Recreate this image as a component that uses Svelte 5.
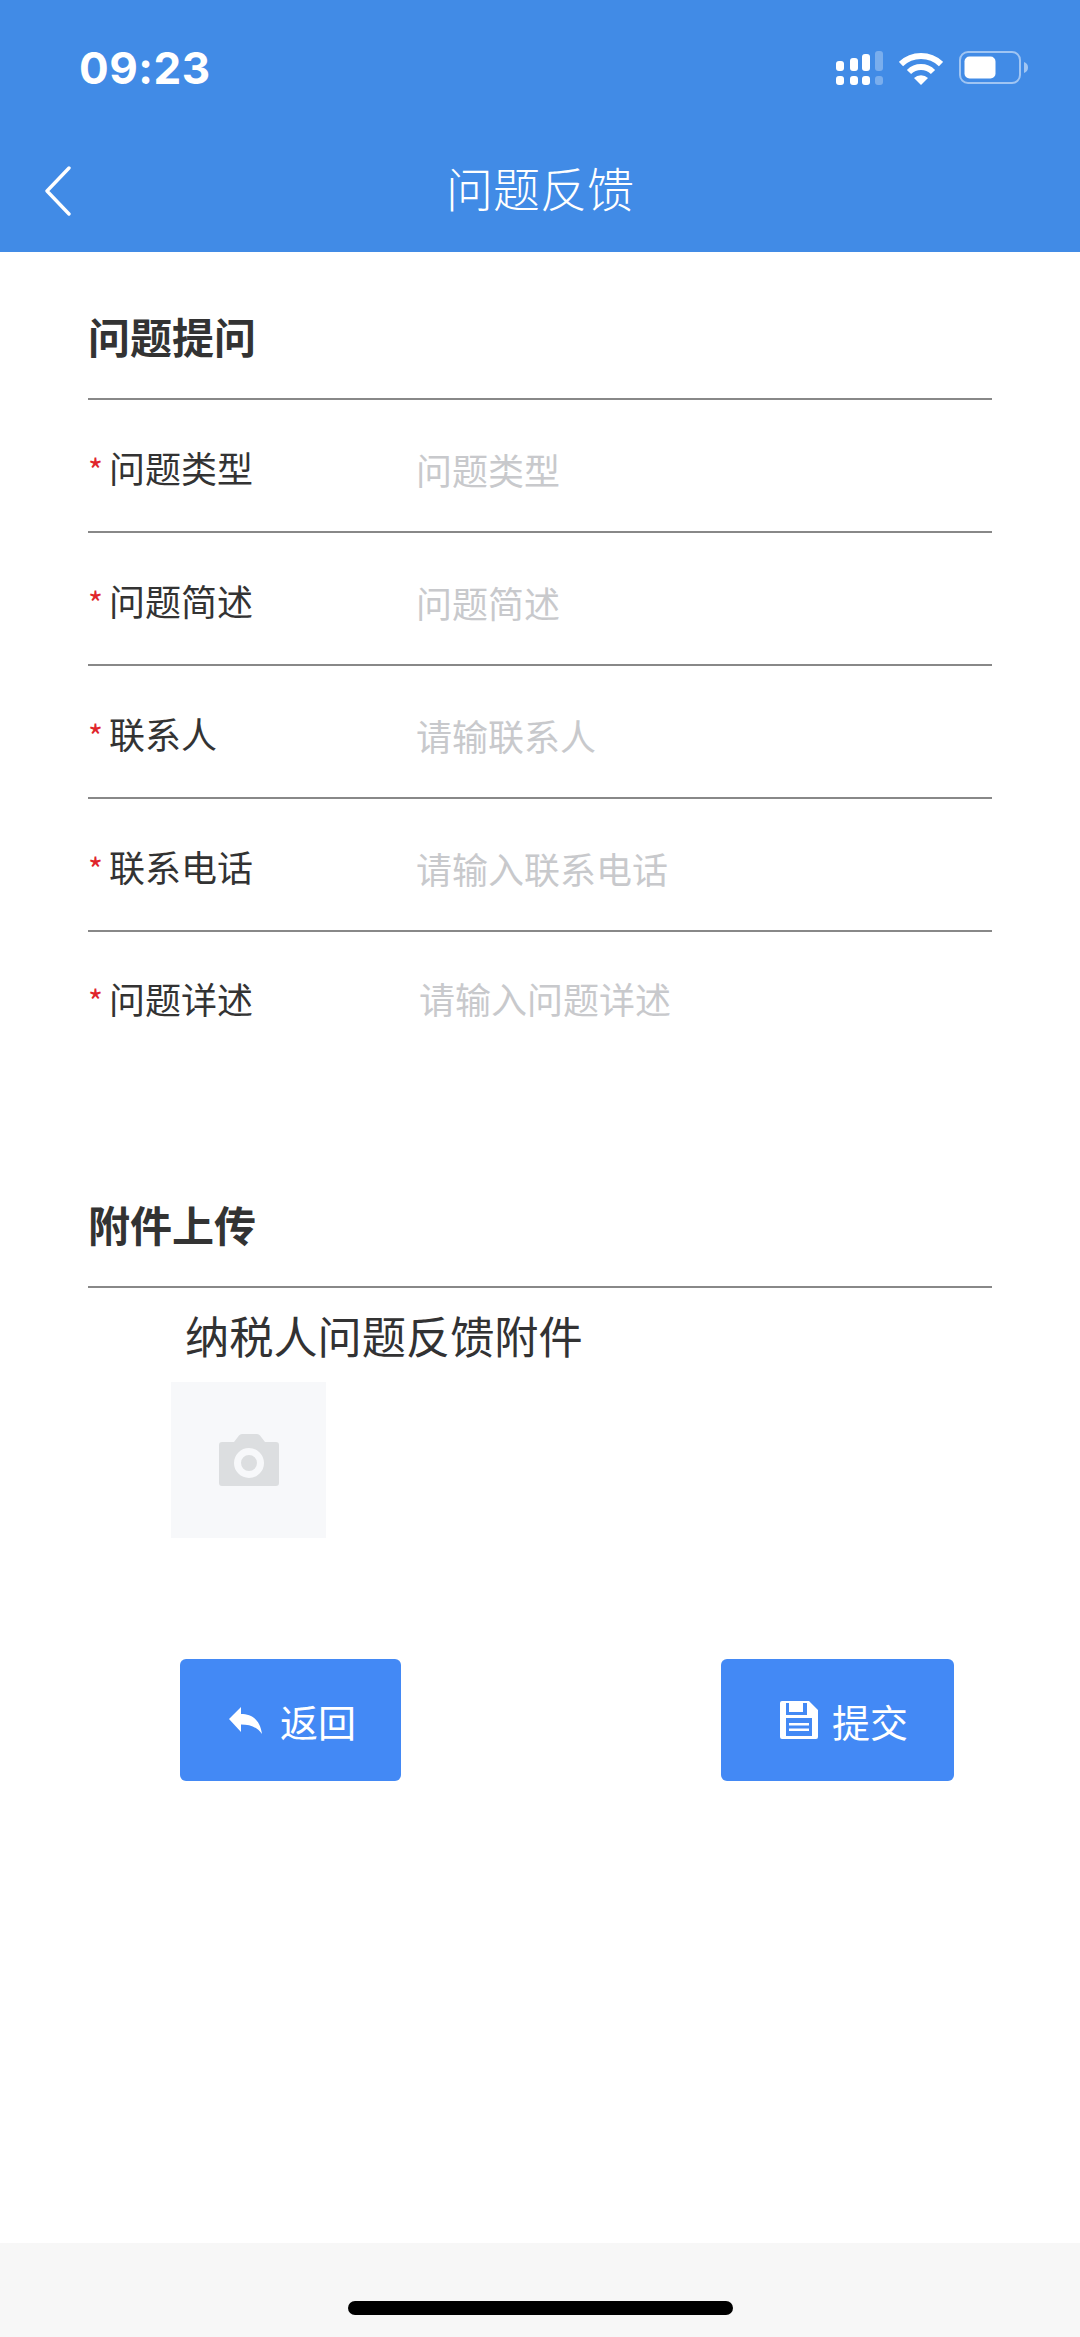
<script lang="ts">
    const fields = [
        { label: "问题类型", hint: "问题类型" },
        { label: "问题简述", hint: "问题简述" },
        { label: "联系人", hint: "请输联系人" },
        { label: "联系电话", hint: "请输入联系电话" },
    ];
</script>

<div class="page">
    <header class="top">
        <div class="status">
            <span class="time">09:23</span>
            <div class="status-icons">
                <svg class="signal" width="47" height="34" viewBox="0 0 47 34" aria-hidden="true">
                    <g fill="#fff">
                        <rect x="0" y="10" width="8" height="10" rx="3" />
                        <rect x="14" y="7" width="8" height="13" rx="3" />
                        <rect x="26" y="3" width="8" height="17" rx="3" />
                        <rect x="39" y="0" width="8" height="20" rx="3" opacity="0.3" />
                        <rect x="0" y="25" width="8" height="9" rx="3" />
                        <rect x="14" y="25" width="8" height="9" rx="3" />
                        <rect x="26" y="25" width="8" height="9" rx="3" />
                        <rect x="39" y="25" width="8" height="9" rx="3" opacity="0.3" />
                    </g>
                </svg>
                <svg class="wifi" width="44" height="33" viewBox="0 0 44 33" aria-hidden="true">
                    <path d="M2 12 A29 29 0 0 1 42 12" fill="none" stroke="#fff" stroke-width="6" />
                    <path d="M10 20 A17 17 0 0 1 34 20" fill="none" stroke="#fff" stroke-width="6" />
                    <path d="M15 26 A10 10 0 0 1 29 26 L22 33 Z" fill="#fff" />
                </svg>
                <svg class="battery" width="70" height="34" viewBox="0 0 70 34" aria-hidden="true">
                    <rect x="1" y="1" width="60" height="31" rx="8" fill="none" stroke="#fff" stroke-opacity="0.5" stroke-width="2" />
                    <rect x="5.5" y="5.5" width="31" height="22" rx="5" fill="#fff" />
                    <path d="M65 11 C68 12 69 14 69 16.5 C69 19 68 21 65 22 Z" fill="#fff" fill-opacity="0.5" />
                </svg>
            </div>
        </div>
        <div class="nav">
            <button class="back" type="button" aria-label="返回">
                <svg width="28" height="50" viewBox="0 0 28 50" aria-hidden="true">
                    <path d="M25 2 L3 25 L25 48" fill="none" stroke="#fff" stroke-width="3.4" stroke-linecap="round" stroke-linejoin="round" />
                </svg>
            </button>
            <h1>问题反馈</h1>
        </div>
    </header>

    <main class="content">
        <section>
            <h2>问题提问</h2>
            {#each fields as field}
                <label class="row">
                    <span class="label"><i>*</i>{field.label}</span>
                    <input type="text" placeholder={field.hint} />
                </label>
            {/each}
            <label class="row detail">
                <span class="label"><i>*</i>问题详述</span>
                <textarea rows="2" placeholder="请输入问题详述"></textarea>
            </label>
        </section>

        <section class="attach">
            <h2>附件上传</h2>
            <p class="attach-name">纳税人问题反馈附件</p>
            <div class="upload">
                <svg width="60" height="52" viewBox="0 0 60 52" aria-hidden="true">
                    <path fill-rule="evenodd" fill="#dcdee0" d="M15 8 L20 1.5 Q21 0 23 0 H38 Q40 0 41 1.5 L46 8 H57 Q60 8 60 11 V49 Q60 52 57 52 H3 Q0 52 0 49 V11 Q0 8 3 8 Z M30 14 A15 15 0 1 0 30 44 A15 15 0 1 0 30 14 Z M30 21 A8 8 0 1 1 30 37 A8 8 0 1 1 30 21 Z" />
                </svg>
            </div>
        </section>

        <div class="actions">
            <button class="btn back-btn" type="button">
                <svg width="33" height="27" viewBox="0 0 33 27" aria-hidden="true">
                    <path fill="#fff" d="M0 12 L12 0 V7 C22 7 31 12 33 27 C28 20 21 17.5 12 17.5 V25 Z" />
                </svg>
                返回
            </button>
            <button class="btn submit-btn" type="button">
                <svg width="38" height="38" viewBox="0 0 38 38" aria-hidden="true">
                    <path fill="#fff" fill-rule="evenodd" d="M2 0 H29 L38 9 V36 Q38 38 36 38 H2 Q0 38 0 36 V2 Q0 0 2 0 Z M6 2 V14 H27 V2 H23 V11 H9 V2 Z M6 17 V35 H32 V17 Z M9 22 H29 V24.5 H9 Z M9 27.5 H29 V30 H9 Z" />
                </svg>
                提交
            </button>
        </div>
    </main>

    <footer class="home-bar"><span></span></footer>
</div>

<style>
    :global(body) {
        margin: 0;
        background: #fff;
    }

    .page {
        display: flex;
        flex-direction: column;
        width: 1080px;
        height: 2337px;
        overflow: hidden;
        font-family: "Noto Sans CJK SC", "Liberation Sans", sans-serif;
        color: #333;
    }

    .top {
        flex: none;
        height: 252px;
        background: #418be6;
        color: #fff;
    }

    .status {
        display: flex;
        align-items: center;
        justify-content: space-between;
        height: 136px;
        padding: 0 51px 0 79px;
    }

    .time {
        font-family: Inter, "Liberation Sans", sans-serif;
        font-size: 44px;
        font-weight: 700;
        letter-spacing: 0.5px;
    }

    .status-icons {
        display: flex;
        align-items: center;
        gap: 16px;
    }

    .nav {
        position: relative;
        display: flex;
        align-items: center;
        justify-content: center;
        height: 116px;
    }

    .back {
        position: absolute;
        left: 44px;
        top: 30px;
        padding: 0;
        border: none;
        background: none;
        line-height: 0;
    }

    h1 {
        margin: 0 0 14px;
        font-size: 47px;
        font-weight: 300;
        line-height: 64px;
    }

    .content {
        flex: 1;
        padding: 0 88px;
    }

    h2 {
        margin: 0;
        height: 148px;
        box-sizing: border-box;
        padding-top: 55px;
        border-bottom: 2px solid #888;
        font-size: 42px;
        font-weight: 700;
        line-height: 58px;
        color: #333;
    }

    .row {
        display: flex;
        align-items: center;
        height: 133px;
        box-sizing: border-box;
        padding-top: 4px;
        border-bottom: 2px solid #888;
    }

    .row.detail {
        align-items: flex-start;
        height: 150px;
        padding-top: 41px;
        border-bottom: none;
    }

    .label {
        flex: none;
        width: 328px;
        font-size: 36px;
        line-height: 50px;
        color: #333;
    }

    .label i {
        display: inline-block;
        width: 21px;
        color: #e0252b;
        font-style: normal;
        font-size: 32px;
    }

    input,
    textarea {
        flex: 1;
        min-width: 0;
        margin: 2px 0 0;
        padding: 0;
        border: none;
        outline: none;
        background: none;
        font: inherit;
        font-size: 36px;
        line-height: 50px;
        resize: none;
    }

    textarea {
        margin: 0 0 0 3px;
    }

    input::placeholder,
    textarea::placeholder {
        color: #c8c9cc;
        opacity: 1;
    }

    .attach {
        margin-top: 61px;
    }

    .attach h2 {
        height: 145px;
        padding-top: 52px;
    }

    .attach-name {
        margin: 0;
        padding: 16px 0 0 97px;
        font-size: 44.2px;
        line-height: 62px;
        color: #323233;
    }

    .upload {
        display: flex;
        align-items: center;
        justify-content: center;
        width: 155px;
        height: 156px;
        margin: 16px 0 0 83px;
        background: #f7f8fa;
    }

    .actions {
        display: flex;
        justify-content: space-between;
        margin: 121px 38px 0 92px;
    }

    .btn {
        display: flex;
        align-items: center;
        justify-content: center;
        height: 122px;
        border: none;
        border-radius: 6px;
        background: #4389f5;
        color: #fff;
        font: inherit;
        font-size: 38px;
    }

    .back-btn {
        gap: 18px;
        width: 221px;
        padding: 0 0 0 4px;
    }

    .submit-btn {
        gap: 14px;
        width: 233px;
        padding: 0 0 0 13px;
    }

    .home-bar {
        flex: none;
        display: flex;
        justify-content: center;
        height: 94px;
        background: #f7f7f7;
    }

    .home-bar span {
        width: 385px;
        height: 14px;
        margin-top: 58px;
        border-radius: 7px;
        background: #000;
    }
</style>
